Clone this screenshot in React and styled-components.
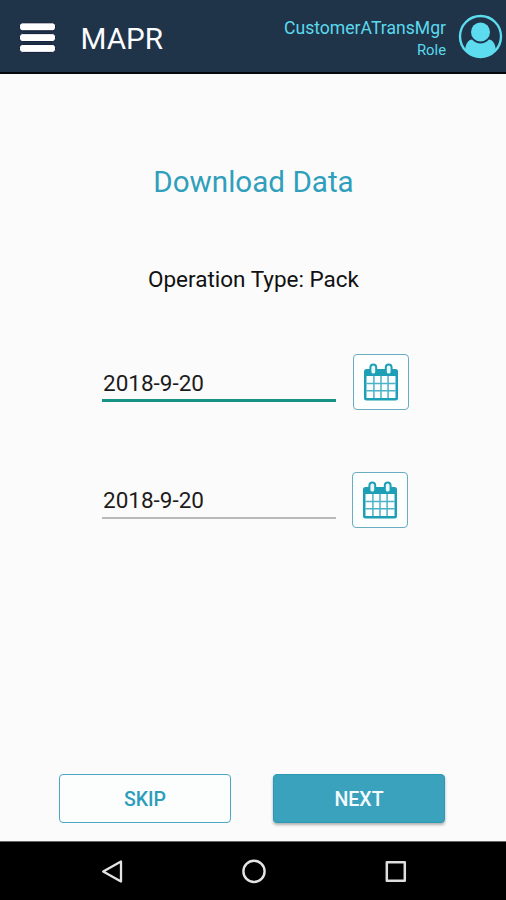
import React from "react";
import styled, { createGlobalStyle } from "styled-components";

const GlobalStyle = createGlobalStyle`
  * { box-sizing: border-box; }
  body { margin: 0; background: #fafafa; font-family: Roboto, sans-serif; }
`;

const Screen = styled.div`
  width: 506px;
  height: 900px;
  display: flex;
  flex-direction: column;
  background: #fbfbfb;
  overflow: hidden;
`;

const Header = styled.header`
  height: 74px;
  flex: none;
  display: flex;
  align-items: flex-start;
  background: #1f3449;
  border-bottom: 2px solid #05090e;
  padding: 0 3px 0 19px;
`;

const MenuButton = styled.button`
  width: 37px;
  height: 32px;
  margin-top: 22px;
  padding: 0;
  border: 0;
  background: none;
  svg { display: block; }
`;

const AppName = styled.h1`
  margin: 19px 0 0 24.5px;
  font-size: 29.7px;
  font-weight: 400;
  line-height: 40px;
  color: #fbfdff;
`;

const User = styled.div`
  margin: 18px 12px 0 auto;
  text-align: right;
  color: #5cd9ec;
`;

const UserName = styled.div`
  font-size: 17.6px;
  line-height: 21px;
`;

const UserRole = styled.div`
  font-size: 14.8px;
  line-height: 23px;
`;

const Avatar = styled.svg`
  width: 45px;
  height: 45px;
  margin-top: 14px;
`;

const Main = styled.main`
  flex: 1;
  display: flex;
  flex-direction: column;
  align-items: center;
`;

const Title = styled.h2`
  margin: 88px 0 0 1px;
  font-size: 29.6px;
  font-weight: 400;
  line-height: 40px;
  color: #2f9fbc;
  white-space: nowrap;
`;

const Operation = styled.p`
  margin: 62px 0 0 1px;
  font-size: 22.5px;
  line-height: 30px;
  color: #111;
`;

const Dates = styled.div`
  align-self: stretch;
  display: flex;
  flex-direction: column;
  gap: 61px;
  margin-top: 60px;
  padding-left: 102px;
`;

const DateRow = styled.div`
  display: flex;
  align-items: flex-start;
  gap: ${(p) => (p.$active ? 17 : 16)}px;
  height: 57px;
`;

const DateField = styled.div`
  width: 234px;
  height: ${(p) => (p.$active ? 48 : 47)}px;
  padding: ${(p) => (p.$active ? 14 : 13)}px 0 0 1px;
  font-size: 22.5px;
  line-height: 30px;
  color: #1c1c1c;
  border-bottom: ${(p) => (p.$active ? "3px solid #169384" : "2px solid #b9b9b9")};
`;

const CalendarButton = styled.button`
  width: 56px;
  height: 56px;
  padding: 0;
  display: flex;
  align-items: center;
  justify-content: center;
  border: 1.5px solid #68adc3;
  border-radius: 4px;
  background: #fdfefe;
`;

const Actions = styled.div`
  display: flex;
  gap: 42px;
  margin: auto 0 18px -2px;
`;

const Action = styled.button`
  width: 172px;
  height: 49px;
  padding: 0;
  border-radius: 4px;
  border: 1px solid ${(p) => (p.$primary ? "#2b99b3" : "#4ba8c4")};
  background: ${(p) => (p.$primary ? "#3ba2bd" : "#fcfdfd")};
  color: ${(p) => (p.$primary ? "#f4fcff" : "#2d9dbb")};
  box-shadow: ${(p) => (p.$primary ? "0 2px 3px rgba(0, 0, 0, 0.3)" : "none")};
  font: 500 19.5px/26px Roboto, sans-serif;
  padding-top: 2px;
`;

const NavBar = styled.nav`
  height: 59px;
  flex: none;
  display: flex;
  justify-content: space-between;
  padding: 17px 98px 0 100px;
  background: #000;
  border-top: 1px solid #666;
  svg { width: 26px; height: 26px; }
`;

const CalendarIcon = () => (
  <svg width="36" height="40" viewBox="0 0 36 40" fill="none">
    <rect x="1" y="7" width="34" height="31.5" rx="2.5" fill="#1d9fb6" />
    <rect x="3.5" y="14" width="29" height="22" fill="#fcfeff" />
    <path
      d="M10.9 14V36M18 14V36M25.1 14V36M3.5 21.5H32.5M3.5 28.8H32.5"
      stroke="#4cb3c6"
      strokeWidth="1.5"
    />
    <g fill="#e9fafd" stroke="#1d9fb6" strokeWidth="2">
      <rect x="7.4" y="2.6" width="5.8" height="10" rx="2.9" />
      <rect x="22.8" y="2.6" width="5.8" height="10" rx="2.9" />
    </g>
  </svg>
);

const DateEntry = ({ value, active, label }) => (
  <DateRow $active={active}>
    <DateField $active={active}>{value}</DateField>
    <CalendarButton aria-label={label}>
      <CalendarIcon />
    </CalendarButton>
  </DateRow>
);

export default function App() {
  return (
    <Screen>
      <GlobalStyle />
      <Header>
        <MenuButton aria-label="Menu">
          <svg width="37" height="32" viewBox="0 0 37 32">
            <g fill="#fff" stroke="#0b1533" strokeWidth="1">
              <rect x="0.5" y="0.8" width="36" height="8" rx="3" />
              <rect x="0.5" y="11.6" width="36" height="8" rx="3" />
              <rect x="0.5" y="22.4" width="36" height="8" rx="3" />
            </g>
          </svg>
        </MenuButton>
        <AppName>MAPR</AppName>
        <User>
          <UserName>CustomerATransMgr</UserName>
          <UserRole>Role</UserRole>
        </User>
        <Avatar viewBox="0 0 45 45">
          <circle cx="22.5" cy="22.5" r="20.5" fill="none" stroke="#5edcef" strokeWidth="2.4" />
          <circle cx="22.5" cy="18" r="9.5" fill="#5edcef" />
          <path
            d="M7.2 36.2C7.4 30 10.6 25.8 14 25.6C18.8 30.8 26.2 30.8 31 25.6C34.4 25.8 37.6 30 37.8 36.2C29.5 45.6 15.5 45.6 7.2 36.2Z"
            fill="#5edcef"
          />
        </Avatar>
      </Header>
      <Main>
        <Title>Download Data</Title>
        <Operation>Operation Type: Pack</Operation>
        <Dates>
          <DateEntry value="2018-9-20" active label="Choose start date" />
          <DateEntry value="2018-9-20" label="Choose end date" />
        </Dates>
        <Actions>
          <Action>SKIP</Action>
          <Action $primary>NEXT</Action>
        </Actions>
      </Main>
      <NavBar>
        <svg viewBox="0 0 26 26" fill="none" stroke="#e4e4e4" strokeWidth="2.3" strokeLinejoin="round">
          <path d="M3.2 12.5L21 2.5V22.5Z" />
        </svg>
        <svg viewBox="0 0 26 26" fill="none" stroke="#e4e4e4" strokeWidth="2.4">
          <circle cx="13" cy="12.4" r="10.6" />
        </svg>
        <svg viewBox="0 0 26 26" fill="none" stroke="#dedede" strokeWidth="2.5" strokeLinejoin="round">
          <rect x="4.8" y="3.2" width="18" height="18.6" />
        </svg>
      </NavBar>
    </Screen>
  );
}
